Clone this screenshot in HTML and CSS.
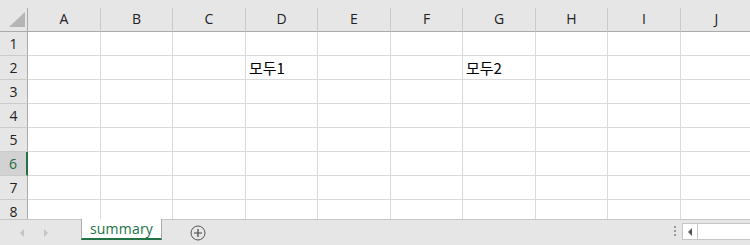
FILE: index.html
```html
<!DOCTYPE html>
<html>
<head>
    <meta charset="UTF-8">
    <title>summary</title>
    <link rel="stylesheet" href="styles.css">
</head>
<body>
<div id="sheet">
    <div class="head">
        <div class="corner"><span class="tri"></span></div>
        <div>A</div><div>B</div><div>C</div><div>D</div><div>E</div>
        <div>F</div><div>G</div><div>H</div><div>I</div><div>J</div>
    </div>
    <div class="grid">
        <div class="rh">1</div><div></div><div></div><div></div><div></div><div></div><div></div><div></div><div></div><div></div><div></div>
        <div class="rh">2</div><div></div><div></div><div></div><div class="txt">모두1</div><div></div><div></div><div class="txt">모두2</div><div></div><div></div><div></div>
        <div class="rh">3</div><div></div><div></div><div></div><div></div><div></div><div></div><div></div><div></div><div></div><div></div>
        <div class="rh">4</div><div></div><div></div><div></div><div></div><div></div><div></div><div></div><div></div><div></div><div></div>
        <div class="rh">5</div><div></div><div></div><div></div><div></div><div></div><div></div><div></div><div></div><div></div><div></div>
        <div class="rh on">6</div><div></div><div></div><div></div><div></div><div></div><div></div><div></div><div></div><div></div><div></div>
        <div class="rh">7</div><div></div><div></div><div></div><div></div><div></div><div></div><div></div><div></div><div></div><div></div>
        <div class="rh">8</div><div></div><div></div><div></div><div></div><div></div><div></div><div></div><div></div><div></div><div></div>
    </div>
</div>
<div id="tabs">
    <div class="nav">
        <span class="arr left"></span>
        <span class="arr right"></span>
    </div>
    <div class="tab">summary</div>
    <div class="add">
        <svg width="16" height="16" viewBox="0 0 16 16">
            <circle cx="8" cy="8" r="7" fill="none" stroke="#555" stroke-width="1"/>
            <path d="M8 4v8M4 8h8" stroke="#444" stroke-width="1.2"/>
        </svg>
    </div>
    <div class="dots"><i></i><i></i><i></i></div>
    <div class="scroll">
        <span class="sarr"></span>
        <span class="track"></span>
    </div>
</div>
</body>
</html>
```

FILE: styles.css
```css
* {
    margin: 0;
    padding: 0;
    box-sizing: border-box;
}

body {
    width: 750px;
    height: 245px;
    overflow: hidden;
    background: #e6e6e6;
    font-family: "Open Sans", "Noto Sans", "Noto Sans CJK KR", sans-serif;
    color: #222;
}

#sheet {
    height: 219px;
    overflow: hidden;
    background: #fff;
}

.head, .grid {
    display: grid;
    grid-template-columns: 28px 73px 72px 73px 72px 73px 72px 73px 72px 73px 72px;
    width: 753px;
}

.head {
    padding-top: 8px;
    background: #e6e6e6;
}

.head div {
    height: 24px;
    border-right: 1px solid #cacaca;
    border-bottom: 1px solid #ababab;
    text-align: center;
    font-size: 14px;
    line-height: 22px;
}

.head .corner {
    position: relative;
    border-right-color: #ababab;
}

.corner .tri {
    position: absolute;
    right: 2px;
    bottom: 4px;
    width: 0;
    height: 0;
    border-left: 16px solid transparent;
    border-bottom: 15px solid #b5b5b5;
}

.grid div {
    height: 24px;
    border-right: 1px solid #dadada;
    border-bottom: 1px solid #dadada;
}

.grid .rh {
    background: #e6e6e6;
    border-right-color: #ababab;
    border-bottom-color: #cacaca;
    text-align: center;
    font-size: 14px;
    line-height: 23px;
}

.grid .rh.on {
    background: #d2d2d2;
    color: #1e6b41;
    border-right: 2px solid #217346;
}

.grid .txt {
    padding-left: 3px;
    font-family: "Noto Sans CJK KR", sans-serif;
    font-size: 15px;
    line-height: 24px;
    color: #000;
    white-space: nowrap;
}

#tabs {
    display: flex;
    height: 26px;
    border-top: 1px solid #c6c6c6;
}

.nav {
    width: 81px;
    display: flex;
    align-items: center;
    padding-left: 20px;
    gap: 20px;
}

.arr {
    width: 0;
    height: 0;
    border-top: 4px solid transparent;
    border-bottom: 4px solid transparent;
}

.arr.left {
    border-right: 4px solid #c4c4c4;
}

.arr.right {
    border-left: 4px solid #c4c4c4;
}

.tab {
    width: 81px;
    height: 21px;
    margin-top: -1px;
    background: #fff;
    border-left: 1px solid #ababab;
    border-right: 1px solid #ababab;
    border-bottom: 2px solid #217346;
    color: #217346;
    font-size: 14px;
    line-height: 19px;
    letter-spacing: 0.2px;
    text-align: center;
}

.add {
    width: 72px;
    padding-left: 28px;
    padding-top: 4px;
}

.dots {
    margin-left: auto;
    width: 14px;
    display: flex;
    flex-direction: column;
    align-items: center;
    padding-top: 6px;
    gap: 2px;
}

.dots i {
    width: 2px;
    height: 2px;
    background: #9a9a9a;
}

.scroll {
    width: 68px;
    height: 17px;
    margin-top: 3px;
    display: flex;
    background: #fff;
    border: 1px solid #c6c6c6;
    border-right: none;
}

.sarr {
    width: 15px;
    display: flex;
    align-items: center;
    justify-content: center;
    border-right: 1px solid #c6c6c6;
}

.sarr::before {
    content: "";
    border-top: 4px solid transparent;
    border-bottom: 4px solid transparent;
    border-right: 4px solid #555;
}

.track {
    flex: 1;
}
```
